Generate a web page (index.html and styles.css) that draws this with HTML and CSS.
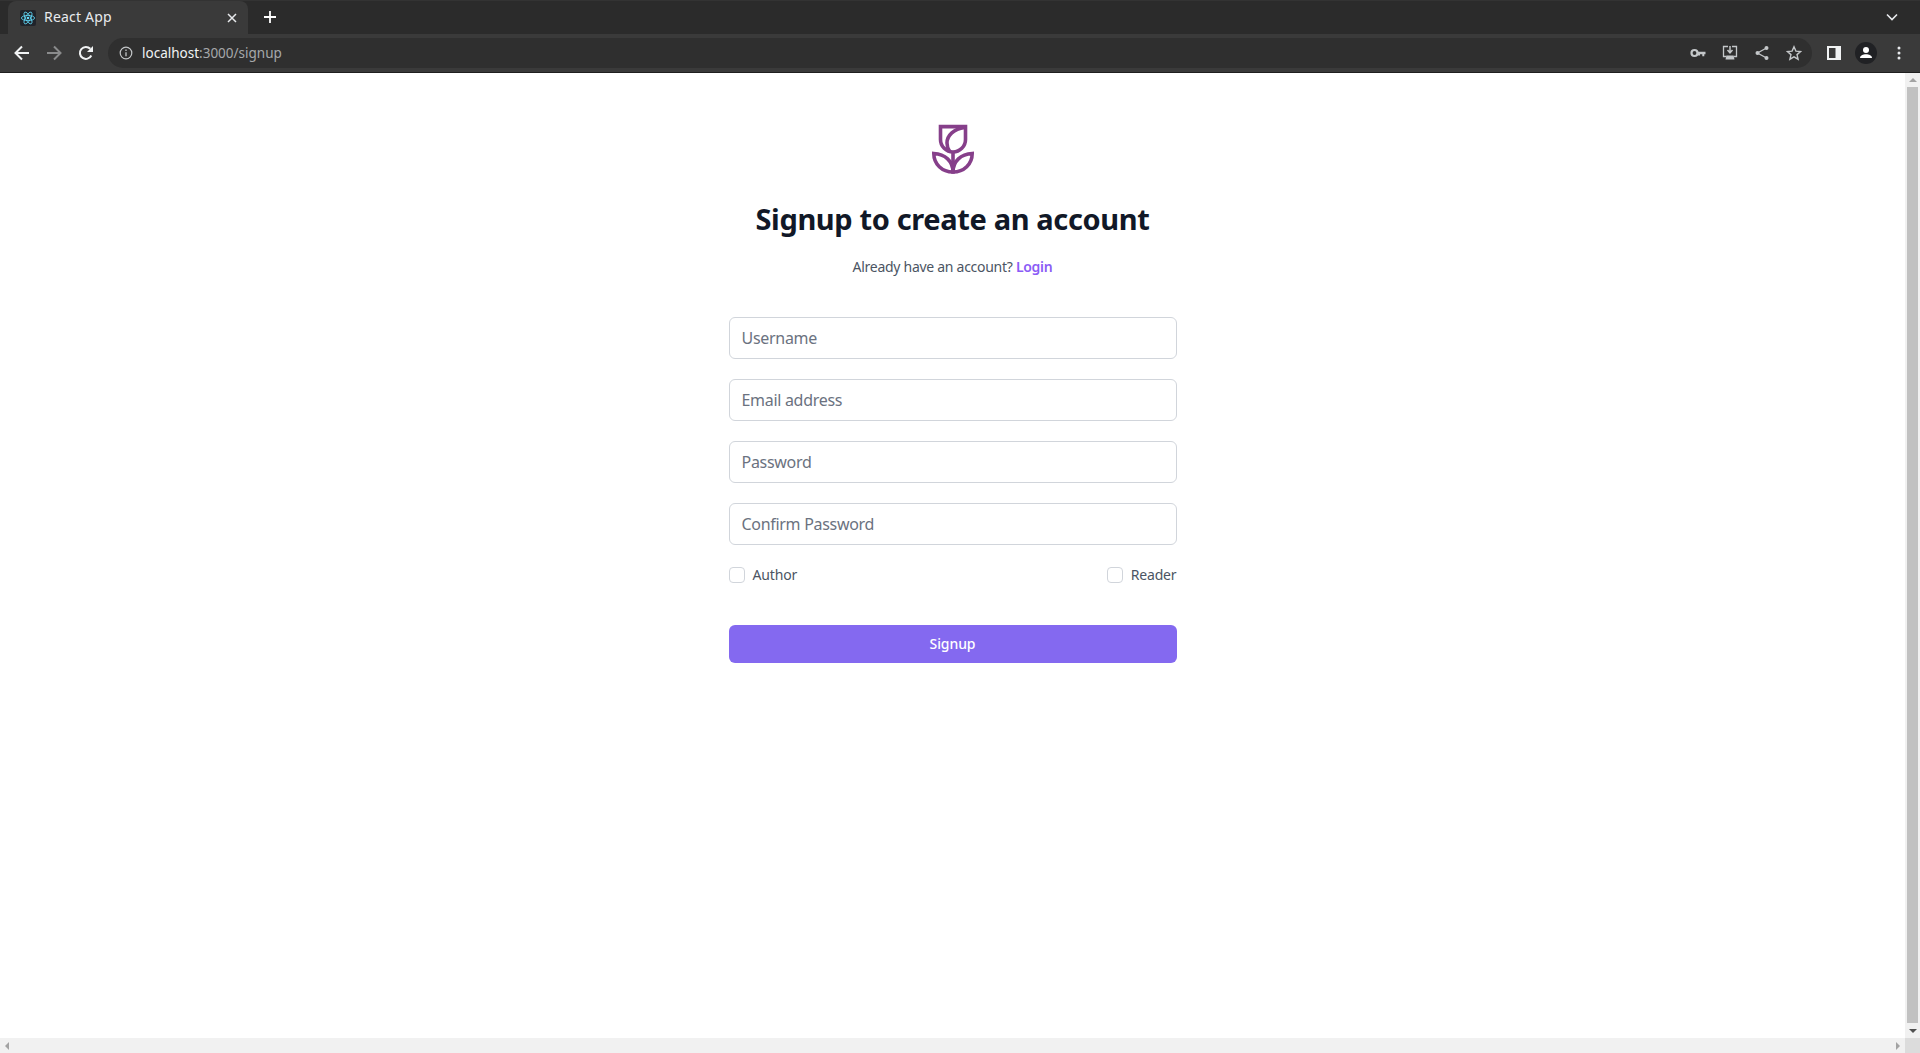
FILE: index.html
```html
<!DOCTYPE html>
<html lang="en">
<head>
	<meta charset="UTF-8">
	<title>React App</title>
	<link rel="stylesheet" href="styles.css">
</head>
<body>
	<div class="tabstrip">
		<div class="tab">
			<svg class="favicon" width="16" height="16" viewBox="0 0 16 16">
				<rect width="16" height="16" rx="2" fill="#20232a"/>
				<g fill="none" stroke="#61dafb" stroke-width="0.8">
					<ellipse cx="8" cy="8" rx="6.6" ry="2.6"/>
					<ellipse cx="8" cy="8" rx="6.6" ry="2.6" transform="rotate(60 8 8)"/>
					<ellipse cx="8" cy="8" rx="6.6" ry="2.6" transform="rotate(120 8 8)"/>
				</g>
				<circle cx="8" cy="8" r="1.3" fill="#61dafb"/>
			</svg>
			<span class="tab_title">React App</span>
			<svg class="tab_close" width="10" height="10" viewBox="0 0 10 10"><path d="M1 1l8 8M9 1l-8 8" stroke="#e8eaed" stroke-width="1.5"/></svg>
		</div>
		<svg class="newtab" width="12" height="12" viewBox="0 0 12 12"><path d="M6 0v12M0 6h12" stroke="#fff" stroke-width="1.8"/></svg>
		<svg class="tablist" width="12" height="8" viewBox="0 0 12 8"><path d="M1 1.5l5 5 5-5" fill="none" stroke="#e8eaed" stroke-width="1.6"/></svg>
	</div>
	<div class="toolbar">
		<svg class="navicon" width="16" height="16" viewBox="0 0 16 16"><path d="M15 8H2M8 1.500L1.500 8 8 14.500" fill="none" stroke="#f1f3f4" stroke-width="2"/></svg>
		<svg class="navicon off" width="16" height="16" viewBox="0 0 16 16"><path d="M1 8h13M8 1.500L14.500 8 8 14.500" fill="none" stroke="#8a8b8c" stroke-width="2"/></svg>
		<svg class="navicon" width="16" height="16" viewBox="0 0 16 16"><path d="M13.300 10.500A6 6 0 1 1 12.300 3.800" fill="none" stroke="#f1f3f4" stroke-width="2"/><path d="M15 1v6H9z" fill="#f1f3f4"/></svg>
		<div class="omnibox">
			<svg class="info" width="14" height="14" viewBox="0 0 14 14"><circle cx="7" cy="7" r="5.800" fill="none" stroke="#c4c7c9" stroke-width="1.200"/><path d="M7 6.200v4M7 3.600v1.400" stroke="#c4c7c9" stroke-width="1.300"/></svg>
			<span class="url"><span class="host">localhost</span>:3000/signup</span>
			<span class="omni_icons">
				<svg width="16" height="16" viewBox="0 0 16 16"><circle cx="4.500" cy="8" r="3" fill="none" stroke="#c4c7c9" stroke-width="2.200"/><path d="M7 6.800h8.500v2.400h-1.200v2h-2v-2H10v1.200H8z" fill="#c4c7c9"/></svg>
				<svg width="16" height="16" viewBox="0 0 16 16"><path d="M6 1.500H1.500v10h3M10 1.500h4.500v10h-3" fill="none" stroke="#c4c7c9" stroke-width="1.300"/><path d="M8 1v6M5.500 5L8 7.800 10.500 5" fill="none" stroke="#c4c7c9" stroke-width="1.500"/><path d="M4.500 10.500h7l1 4h-9z" fill="#c4c7c9"/></svg>
				<svg width="16" height="16" viewBox="0 0 16 16"><path d="M12.500 3L3.500 8l9 5" fill="none" stroke="#c4c7c9" stroke-width="1.300"/><circle cx="12.500" cy="3" r="2" fill="#c4c7c9"/><circle cx="3.500" cy="8" r="2" fill="#c4c7c9"/><circle cx="12.500" cy="13" r="2" fill="#c4c7c9"/></svg>
				<svg width="16" height="16" viewBox="0 0 16 16"><path d="M8 1.800l1.900 4.300 4.700.4-3.600 3.100 1.100 4.600L8 11.800l-4.100 2.400L5 9.600 1.400 6.500l4.700-.4z" fill="none" stroke="#c4c7c9" stroke-width="1.400"/></svg>
			</span>
		</div>
		<svg class="sidepanel" width="14" height="14" viewBox="0 0 14 14"><rect width="14" height="14" fill="#f1f3f4"/><rect x="2" y="2" width="6.500" height="10" fill="#3a3a3a"/></svg>
		<svg class="avatar" width="22" height="22" viewBox="0 0 22 22"><circle cx="11" cy="11" r="11" fill="#202124"/><circle cx="11" cy="8" r="3" fill="#fff"/><path d="M5 16c0-2.600 3-3.800 6-3.800s6 1.200 6 3.800z" fill="#fff"/></svg>
		<svg class="menu" width="4" height="14" viewBox="0 0 4 14"><circle cx="2" cy="2" r="1.500" fill="#e8eaed"/><circle cx="2" cy="7" r="1.500" fill="#e8eaed"/><circle cx="2" cy="12" r="1.500" fill="#e8eaed"/></svg>
	</div>

	<div class="viewport">
		<div class="page">
			<form class="signup">
				<svg class="logo" width="42" height="50" viewBox="0 0 42 50">
					<g fill="none" stroke="#863f8a" stroke-width="3.600">
						<path d="M8.500 2.600H33.500V15.500A12.500 12.500 0 0 1 8.500 15.500Z"/>
						<path d="M32.500 3.500C22 5 15 11 15 19c0 3 1 6 2.500 8"/>
						<path d="M21 28V48"/>
						<path d="M1.800 29.500C13 30 21 37 21 48C10 48 1.800 40 1.800 29.500Z"/>
						<path d="M40.200 29.500C29 30 21 37 21 48C32 48 40.200 40 40.200 29.500Z"/>
					</g>
				</svg>
				<h1 class="title">Signup to create an account</h1>
				<p class="sub">Already have an account? <a class="login" href="#">Login</a></p>
				<div class="fields">
					<input class="field" type="text" placeholder="Username">
					<input class="field" type="email" placeholder="Email address">
					<input class="field" type="password" placeholder="Password">
					<input class="field" type="password" placeholder="Confirm Password">
				</div>
				<div class="roles">
					<label class="role"><input class="check" type="checkbox">Author</label>
					<label class="role"><input class="check" type="checkbox">Reader</label>
				</div>
				<button class="submit" type="button">Signup</button>
			</form>
		</div>
		<div class="vbar">
			<span class="arrow up"></span>
			<span class="vthumb"></span>
			<span class="arrow down"></span>
		</div>
		<div class="hbar">
			<span class="arrow left"></span>
			<span class="arrow right"></span>
		</div>
		<div class="corner"></div>
	</div>
</body>
</html>
```

FILE: styles.css
```css
*{margin:0;padding:0;box-sizing:border-box;}
html,body{height:100%;overflow:hidden;}
body{display:flex;flex-direction:column;background:#fff;font-family:"Noto Sans","Open Sans",sans-serif;}

.tabstrip{height:34px;background:#2b2b2b;display:flex;align-items:flex-end;padding-left:8px;border-top:1px solid #333;}
.tab{width:240px;height:33px;background:#3a3a3a;border-radius:8px 8px 0 0;display:flex;align-items:center;padding-left:12px;padding-right:11px;}
.favicon{margin-right:8px;}
.tab_title{flex:1;color:#e8eaed;font-size:14px;letter-spacing:0.2px;line-height:18px;margin-top:-2px;}
.newtab{margin:0 0 11px 16px;}
.tablist{margin:0 22px 13px auto;}

.toolbar{height:39px;background:#3a3a3a;border-bottom:1px solid #1f1f1f;display:flex;align-items:center;padding-left:14px;}
.navicon{margin-right:16px;}
.omnibox{width:1704px;height:30px;margin-left:-2px;background:#2f2f2f;border-radius:15px;display:flex;align-items:center;padding-left:11px;}
.info{margin-right:9px;}
.url{flex:1;color:#a6a8aa;font-size:13.5px;}
.host{color:#f1f3f4;}
.omni_icons{display:flex;gap:16px;padding-right:10px;}
.sidepanel{margin-left:15px;}
.avatar{margin-left:14px;}
.menu{margin-left:20px;}

.viewport{flex:1;min-height:0;display:grid;grid-template-columns:1fr 15px;grid-template-rows:1fr 15px;}
.page{background:#fff;display:flex;justify-content:center;padding-top:51px;}
.signup{width:448px;display:flex;flex-direction:column;align-items:center;}
.logo{display:block;}
.title{margin-top:27px;font-size:29px;letter-spacing:-0.36px;line-height:36px;font-weight:700;color:#111827;}
.sub{margin-top:20px;font-size:14px;letter-spacing:-0.28px;line-height:20px;color:#4b5563;}
.login{color:#8b5cf6;font-weight:600;text-decoration:none;}
.fields{margin-top:40px;width:100%;display:flex;flex-direction:column;gap:20px;}
.field{width:100%;height:42px;border:1px solid #d1d5db;border-radius:6px;padding:0 12px;font:16px "Noto Sans","Open Sans",sans-serif;letter-spacing:-0.3px;color:#111827;}
.field::placeholder{color:#6b7280;opacity:1;}
.roles{width:100%;margin-top:20px;display:flex;justify-content:space-between;}
.role{display:flex;align-items:center;font-size:14px;letter-spacing:-0.15px;line-height:20px;color:#4b5563;}
.check{appearance:none;width:16px;height:16px;border:1px solid #d1d5db;border-radius:4px;background:#fff;margin-right:8px;}
.submit{width:100%;height:38px;margin-top:40px;padding-bottom:2px;border:none;border-radius:6px;background:#8469f0;color:#fff;font:500 14px "Noto Sans","Open Sans",sans-serif;letter-spacing:-0.1px;}

.vbar{background:#f1f1f1;display:flex;flex-direction:column;align-items:center;padding:0 2px;}
.vthumb{flex:1;width:11px;margin:1px 0 2px;background:#c1c1c1;}
.hbar{background:#f1f1f1;display:flex;justify-content:space-between;align-items:center;padding:0 5px;}
.corner{background:#dcdcdc;}
.arrow{display:block;width:0;height:0;flex:none;border-style:solid;border-color:transparent;}
.arrow.up{margin:5px 0 4px;border-width:0 4px 4px;border-bottom-color:#a3a3a3;}
.arrow.down{margin:4px 0 5px;border-width:4px 4px 0;border-top-color:#505050;}
.arrow.left{border-width:4px 4px 4px 0;border-right-color:#a3a3a3;}
.arrow.right{border-width:4px 0 4px 4px;border-left-color:#a3a3a3;}
```
